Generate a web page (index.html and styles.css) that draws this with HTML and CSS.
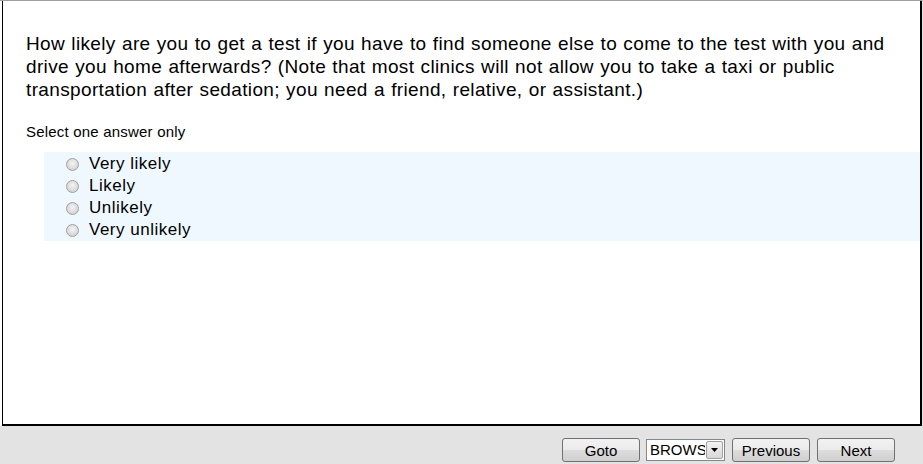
FILE: index.html
```html
<!DOCTYPE html>
<html>
<head>
<meta charset="utf-8">
<link rel="stylesheet" href="styles.css">
</head>
<body>
<div class="top">
  <div class="panel">
    <p class="question">How likely are you to get a test if you have to find someone else to come to the test with you and drive you home afterwards? (Note that most clinics will not allow you to take a taxi or public transportation after sedation; you need a friend, relative, or assistant.)</p>
    <p class="hint">Select one answer only</p>
    <div class="options">
      <label class="opt"><span class="radio"></span>Very likely</label>
      <label class="opt"><span class="radio"></span>Likely</label>
      <label class="opt"><span class="radio"></span>Unlikely</label>
      <label class="opt"><span class="radio"></span>Very unlikely</label>
    </div>
  </div>
</div>
<div class="footer">
  <button class="btn">Goto</button>
  <div class="select"><span class="sel-text">BROWSE</span><span class="sel-arrow"><svg width="7" height="4" viewBox="0 0 7 4"><path d="M0 0h7L3.5 4z" fill="#000"/></svg></span></div>
  <button class="btn">Previous</button>
  <button class="btn">Next</button>
</div>
</body>
</html>
```
FILE: styles.css
```css
html, body {
  margin: 0;
  padding: 0;
}
body {
  width: 923px;
  height: 464px;
  background: #e3e3e3;
  font-family: "Liberation Sans", Arial, sans-serif;
  color: #000;
  overflow: hidden;
}
.top {
  height: 426px;
  background: #fff;
  border-top: 1px solid #a0a0a0;
  border-right: 1px solid #e3e3e3;
  box-sizing: border-box;
  padding: 0 0 0 2px;
}
.panel {
  height: 425px;
  box-sizing: border-box;
  border-left: 1px solid #000;
  border-right: 2px solid #000;
  border-bottom: 2px solid #000;
  padding-top: 31px;
}
.question {
  margin: 0 0 0 23px;
  width: 880px;
  font-size: 19px;
  letter-spacing: 0.36px;
  word-spacing: 0.6px;
  line-height: 23px;
}
.hint {
  margin: 22px 0 0 23px;
  font-size: 15px;
  letter-spacing: 0.2px;
  line-height: 17px;
}
.options {
  margin: 12px 0 0 41px;
  background: #f0f8ff;
  padding: 1px 0 0 22px;
  display: flex;
  flex-direction: column;
}
.opt {
  display: flex;
  align-items: center;
  font-size: 17px;
  letter-spacing: 0.5px;
  height: 22px;
}
.radio {
  width: 11px;
  height: 11px;
  border-radius: 50%;
  border: 1px solid #a0a0a0;
  background: radial-gradient(circle at 50% 40%, #f4f4f4 0%, #d6d6d6 70%, #c4c4c4 100%);
  margin-right: 10px;
  flex: none;
}
.footer {
  height: 38px;
  display: flex;
  justify-content: flex-end;
  align-items: flex-start;
  padding: 12px 28px 0 0;
  box-sizing: border-box;
  gap: 7px;
}
.btn {
  width: 78px;
  height: 24px;
  font-family: "Liberation Sans", Arial, sans-serif;
  font-size: 15px;
  border: 1px solid #707070;
  border-radius: 3px;
  background: linear-gradient(#f2f2f2 0%, #ebebeb 50%, #dddddd 51%, #cfcfcf 100%);
  padding: 0;
  color: #000;
  margin: 0;
}
.select {
  width: 79px;
  height: 22px;
  border: 1px solid #828790;
  background: #fff;
  display: flex;
  box-sizing: border-box;
  margin: 1px 0 0 -1px;
}
.sel-text {
  flex: 1;
  overflow: hidden;
  white-space: nowrap;
  font-size: 15px;
  line-height: 20px;
  padding-left: 3px;
}
.sel-arrow {
  width: 17px;
  margin: 1px;
  border: 1px solid #a0a0a0;
  border-radius: 2px;
  background: linear-gradient(#f2f2f2, #d8d8d8);
  display: flex;
  align-items: center;
  justify-content: center;
  box-sizing: border-box;
}
```
